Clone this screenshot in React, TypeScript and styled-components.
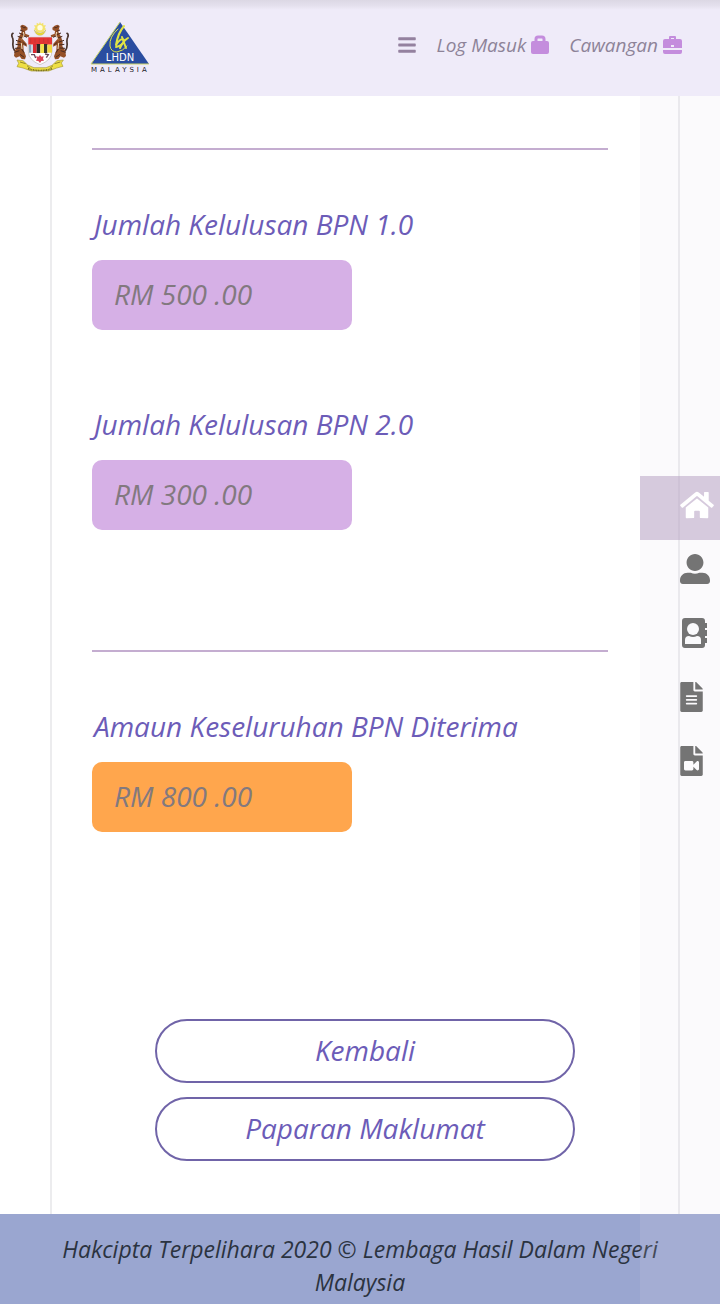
import React from "react";
import styled, { createGlobalStyle } from "styled-components";
import {
  FaBars,
  FaFileAlt,
  FaFileVideo,
  FaHome,
  FaUserAlt,
} from "react-icons/fa";

const GlobalStyle = createGlobalStyle`
  *, *::before, *::after { box-sizing: border-box; }
  body {
    margin: 0;
    background: #ffffff;
    font-family: "Open Sans", sans-serif;
    font-style: italic;
    font-weight: 500;
  }
`;

const Page = styled.div`
  display: flex;
  flex-direction: column;
  min-height: 100vh;
`;

const Header = styled.header`
  position: sticky;
  top: 0;
  z-index: 3;
  display: flex;
  align-items: center;
  justify-content: space-between;
  height: 96px;
  padding: 0 38px 4px 10px;
  background: linear-gradient(#dcd8e4 0, #e5e1ee 6px, #efebf9 10px);
`;

const Brand = styled.a`
  display: flex;
  align-items: center;
  gap: 20px;
`;

const TopNav = styled.nav`
  display: flex;
  align-items: center;
  gap: 20px;
  padding-bottom: 2px;
`;

const MenuButton = styled.button`
  display: flex;
  padding: 0;
  border: 0;
  background: none;
  color: #94819f;
  font-size: 20px;
`;

const TopLink = styled.a`
  display: flex;
  align-items: center;
  gap: 5px;
  color: #8d8398;
  font-size: 19px;
  line-height: 24px;
  text-decoration: none;

  svg { color: #c48ddd; }
`;

const Card = styled.main`
  display: flex;
  flex: 1;
  flex-direction: column;
  margin: 0 40px 0 50px;
  padding: 52px 0 53px;
  border: solid #ececee;
  border-width: 0 2px;
`;

const Group = styled.section`
  margin: 0 70px 0 40px;
  padding: 54px 0 120px;
  border-top: 2px solid #c4add0;
  display: flex;
  flex-direction: column;
  gap: 74px;

  & + & { padding-bottom: 187px; }
`;

const Field = styled.div`
  display: flex;
  flex-direction: column;
  align-items: flex-start;
  gap: 16px;
`;

const Label = styled.label`
  padding-left: 2px;
  color: #6c5cb8;
  font-size: 28px;
  line-height: 40px;
`;

const Amount = styled.input<{ $tone: string }>`
  width: 260px;
  max-width: 100%;
  height: 70px;
  padding: 0 22px 2px;
  border: 0;
  border-radius: 10px;
  background: ${(p) => p.$tone};
  color: #82797f;
  font: inherit;
  font-size: 28px;
`;

const Actions = styled.div`
  display: flex;
  flex-direction: column;
  align-items: center;
  gap: 14px;
`;

const PillButton = styled.button`
  width: 67%;
  height: 64px;
  padding: 0 0 2px;
  border: 2px solid #7064a8;
  border-radius: 32px;
  background: #ffffff;
  color: #6c5cb8;
  font: inherit;
  font-size: 28px;
`;

const Footer = styled.footer`
  padding: 19px 50px 5px;
  background: #9aa6d0;
  color: #2b3340;
  font-size: 23px;
  line-height: 33px;
  text-align: center;
`;

const SideNav = styled.nav`
  position: fixed;
  top: 96px;
  right: 0;
  bottom: 0;
  z-index: 2;
  display: flex;
  flex-direction: column;
  width: 80px;
  padding-top: 380px;
  background: rgba(224, 220, 236, 0.14);
`;

const SideLink = styled.a<{ $active?: boolean; $iconWidth: number }>`
  display: flex;
  align-items: center;
  height: 64px;
  padding: 0 0 6px 40px;
  background: ${(p) => (p.$active ? "rgba(178, 156, 192, 0.5)" : "transparent")};
  color: ${(p) => (p.$active ? "#ffffff" : "#747474")};

  svg {
    flex: none;
    width: ${(p) => p.$iconWidth}px;
    height: 30px;
  }
`;

const Crest = () => (
  <svg width="60" height="52" viewBox="0 0 180 156" role="img" aria-label="Jata Negara">
    <g fill="none" strokeLinecap="round">
      <path d="M14 92C2 78 14 64 7 52Q3 43 9 40" stroke="#49342d" strokeWidth="5" />
      <path d="M166 92C178 78 166 64 173 52Q177 43 171 40" stroke="#49342d" strokeWidth="5" />
    </g>
    <g>
      <path d="M31 18l7-4 8 3 7 6-1 7-7 3 1 8 12 5-2 6-15-3-3 9 12 13 1 9-11-5 1 16 7 18-3 9-10-1-6-8-11 4-6-5 2-16 9-13-1-13 5-16 8-14z" fill="#955027" />
      <path d="M34 18l7 5 6 0M30 30l10 4M27 39l13 5M23 49l14 5M18 61l15 5M17 73l17 2M15 85l16-1M13 97l15-5M34 86l8 12M30 103l13 9M40 47l11 5M38 67l10 8" fill="none" stroke="#4a2c22" strokeWidth="3" />
      <path d="M40 36l2 9-6 13M34 69l2 18" fill="none" stroke="#edddbf" strokeWidth="3" />
    </g>
    <g transform="translate(180 0) scale(-1 1)">
      <path d="M31 18l7-4 8 3 7 6-1 7-7 3 1 8 12 5-2 6-15-3-3 9 12 13 1 9-11-5 1 16 7 18-3 9-10-1-6-8-11 4-6-5 2-16 9-13-1-13 5-16 8-14z" fill="#955027" />
      <path d="M34 18l7 5 6 0M30 30l10 4M27 39l13 5M23 49l14 5M18 61l15 5M17 73l17 2M15 85l16-1M13 97l15-5M34 86l8 12M30 103l13 9M40 47l11 5M38 67l10 8" fill="none" stroke="#4a2c22" strokeWidth="3" />
      <path d="M40 36l2 9-6 13M34 69l2 18" fill="none" stroke="#edddbf" strokeWidth="3" />
    </g>
    <path d="M90 5l3 7 7-4 0 8 8 0-4 7 5 5-7 3-1 6-22 0-2-6-6-3 5-5-4-7 8 0 0-8 7 4z" fill="#f3e36d" />
    <circle cx="90" cy="23" r="8" fill="#fffce0" />
    <path d="M73 30Q77 46 90 46T107 30Q103 39 90 39T73 30" fill="#eadc39" stroke="#a99b35" strokeWidth="1" />
    <path d="M55 52H126V94Q125 121 90 134Q56 121 55 94Z" fill="#fff" stroke="#bcb7b1" strokeWidth="2" />
    <path d="M55 52H126V74H55Z" fill="#e43434" />
    <path d="M62 56v13M75 56v13M88 56v13M101 56v13M114 56v13" stroke="#c83734" strokeWidth="3" />
    <path d="M55 74H69V98H57Z" fill="#c9d7e3" />
    <path d="M60 74v24" stroke="#496f98" strokeWidth="3" />
    <path d="M69 72H80V99H69Z" fill="#d92830" />
    <path d="M80 72H91V99H80Z" fill="#292725" />
    <path d="M91 72H102V99H91Z" fill="#f4e14a" />
    <path d="M102 72H112V99H102Z" fill="#35352b" />
    <path d="M112 74H126V98H112Z" fill="#f2d73f" />
    <path d="M63 104l10 0 4 10M105 102l10 2-6 9" stroke="#6a4a5b" strokeWidth="4" fill="none" />
    <path d="M90 105l4 5 7-1-2 7 3 6-8 1-4 6-5-6-7-1 3-6-3-7 8 1z" fill="#d94357" />
    <path d="M21 120l18 2 14 13 19 8 36 0 18-7 15-14 19-2-6 9 5 10-19 5-24 9-52 0-25-9-18-4 5-10z" fill="#eedf43" stroke="#a89c3b" strokeWidth="2" />
    <path d="M51 137l9 8M129 137l-9 8M30 126l17 5M151 126l-17 5" stroke="#92852c" strokeWidth="3" />
    <path d="M54 146Q90 157 127 146" fill="none" stroke="#6f671f" strokeWidth="5" strokeDasharray="3 2" />
  </svg>
);

const LhdnLogo = () => (
  <svg width="70" height="60" viewBox="0 -4 70 60" role="img" aria-label="LHDN Malaysia">
    <path d="M30 2L59 44H1Z" fill="#2a4da0" />
    <path d="M30 2L1 44H59" fill="none" stroke="#ced768" strokeWidth="1" />
    <g fill="none" stroke="#e0e345" strokeLinecap="round">
      <path d="M34 6Q28 13 26 25M26 25Q31 17 34 20Q34 25 26 27" strokeWidth="2" />
      <path d="M32 17L36 28M38 18Q33 21 30 28" strokeWidth="2" />
      <path d="M28 9Q19 17 20 26Q21 32 27 32Q33 31 37 26" strokeWidth="1" />
    </g>
    <text x="30" y="41" fill="#fff" fontFamily="DejaVu Sans, sans-serif" fontStyle="normal" fontWeight="400" fontSize="10" textAnchor="middle">LHDN</text>
    <text x="1" y="52" fill="#20202a" fontFamily="DejaVu Sans, sans-serif" fontStyle="normal" fontSize="7" fontWeight="400" letterSpacing="3">MALAYSIA</text>
  </svg>
);

const LockIcon = () => (
  <svg width="18" height="20" viewBox="0 0 18 20" fill="none" aria-hidden="true">
    <path d="M5 8V4Q5 2 7 2H11Q13 2 13 4V8" stroke="currentColor" strokeWidth="3" />
    <rect y="6" width="18" height="13" rx="2" fill="currentColor" />
  </svg>
);

const BriefcaseIcon = () => (
  <svg width="19" height="20" viewBox="0 0 19 20" fill="none" aria-hidden="true">
    <path d="M7 4V2H12V4" stroke="currentColor" strokeWidth="2" strokeLinejoin="round" />
    <path d="M2 4H17Q19 4 19 6V13H0V6Q0 4 2 4M0 15H19V17Q19 19 17 19H2Q0 19 0 17Z" fill="currentColor" />
    <path d="M8 10H11V12H8Z" fill="#efebf9" />
  </svg>
);

const AddressBookIcon = () => (
  <svg viewBox="0 0 28 30" aria-hidden="true">
    <path d="M5 0H22Q25 0 25 3V5H27V10H25V12H27V18H25V20H27V25H25V27Q25 30 22 30H5Q2 30 2 27V3Q2 0 5 0Z" fill="currentColor" />
    <circle cx="13" cy="11" r="6" fill="#fafafc" />
    <path d="M5 26V22Q5 18 9 18Q13 20 17 18Q21 18 21 22V26Z" fill="#fafafc" />
  </svg>
);

type AmountFieldProps = { id: string; label: string; value: string; tone?: string };

const AmountField = ({ id, label, value, tone = "#d6b0e6" }: AmountFieldProps) => (
  <Field>
    <Label htmlFor={id}>{label}</Label>
    <Amount id={id} defaultValue={value} readOnly $tone={tone} />
  </Field>
);

const sideLinks = [
  { label: "Utama", Icon: FaHome, width: 34, active: true },
  { label: "Profil", Icon: FaUserAlt, width: 30 },
  { label: "Hubungi", Icon: AddressBookIcon, width: 28 },
  { label: "Dokumen", Icon: FaFileAlt, width: 23 },
  { label: "Video", Icon: FaFileVideo, width: 23 },
];

export default function App() {
  return (
    <Page>
      <GlobalStyle />
      <Header>
        <Brand href="#" aria-label="LHDN Malaysia">
          <Crest />
          <LhdnLogo />
        </Brand>
        <TopNav>
          <MenuButton type="button" aria-label="Menu"><FaBars /></MenuButton>
          <TopLink href="#">Log Masuk<LockIcon /></TopLink>
          <TopLink href="#">Cawangan<BriefcaseIcon /></TopLink>
        </TopNav>
      </Header>
      <Card>
        <Group>
          <AmountField id="bpn1" label="Jumlah Kelulusan BPN 1.0" value="RM 500 .00" />
          <AmountField id="bpn2" label="Jumlah Kelulusan BPN 2.0" value="RM 300 .00" />
        </Group>
        <Group>
          <AmountField id="total" label="Amaun Keseluruhan BPN Diterima" value="RM 800 .00" tone="#ffa64d" />
        </Group>
        <Actions>
          <PillButton type="button">Kembali</PillButton>
          <PillButton type="button">Paparan Maklumat</PillButton>
        </Actions>
      </Card>
      <Footer>Hakcipta Terpelihara 2020 © Lembaga Hasil Dalam Negeri Malaysia</Footer>
      <SideNav aria-label="Pintasan">
        {sideLinks.map(({ label, Icon, width, active }) => (
          <SideLink key={label} href="#" aria-label={label} $active={active} $iconWidth={width}>
            <Icon />
          </SideLink>
        ))}
      </SideNav>
    </Page>
  );
}
